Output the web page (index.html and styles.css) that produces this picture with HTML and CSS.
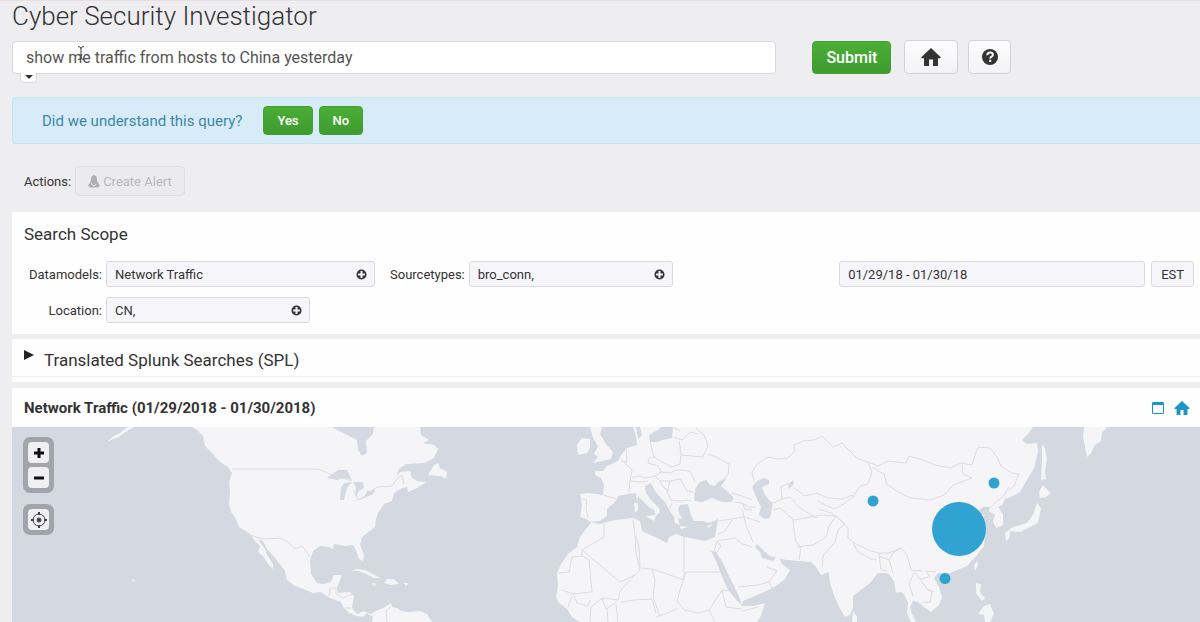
FILE: index.html
```html
<!DOCTYPE html>
<html lang="en">
<head>
    <meta charset="UTF-8">
    <meta name="viewport" content="width=device-width, initial-scale=1.0">
    <title>Cyber Security Investigator</title>
    <link rel="stylesheet" href="styles.css">
</head>
<body>
    <!-- shared icons -->
    <svg class="sprite" aria-hidden="true">
        <symbol id="icon-home" viewBox="0 0 20 18">
            <path d="M10 0 20 9.400 18.800 10.300H17V17.200Q17 18 16.200 18H12V11.500H8V18H3.800Q3 18 3 17.200V10.300H1.200L0 9.400Z"/>
        </symbol>
        <symbol id="icon-plus" viewBox="0 0 12 12">
            <path fill-rule="evenodd" d="M6 0.500a5.500 5.500 0 1 0 0 11a5.500 5.500 0 0 0 0-11ZM4.900 2.300H7.100V4.900H9.700V7.100H7.100V9.700H4.900V7.100H2.300V4.900H4.900Z"/>
        </symbol>
    </svg>

    <h1>Cyber Security Investigator</h1>

    <!-- Query -->
    <form class="query">
        <div class="query-box">
            <input type="text" class="query-input" aria-label="Query" value="show me traffic from hosts to China yesterday">
            <button type="button" class="query-toggle" aria-label="Query history"></button>
            <svg class="ibeam" viewBox="0 0 8 16" aria-hidden="true"><path d="M1 1.500Q4 1.500 4 4V12Q4 14.500 1 14.500M7 1.500Q4 1.500 4 4M4 12Q4 14.500 7 14.500M2.500 10H5.500"/></svg>
        </div>
        <button type="button" class="btn btn-green btn-submit">Submit</button>
        <button type="button" class="btn btn-home" aria-label="Home"><svg class="icon-home"><use href="#icon-home"/></svg></button>
        <button type="button" class="btn btn-help" aria-label="Help">
            <svg class="icon-help" viewBox="0 0 16 16"><circle cx="8" cy="8" r="8"/><path d="M5.300 6.200C5.300 4.500 6.400 3.600 8.100 3.600S10.900 4.500 10.900 6C10.900 7.700 8.200 7.700 8.200 9.500M8.200 10.800V12.900"/></svg>
        </button>
    </form>

    <div class="confirm">
        <span class="confirm-text">Did we understand this query?</span>
        <button type="button" class="btn btn-green btn-small">Yes</button>
        <button type="button" class="btn btn-green btn-small">No</button>
    </div>

    <div class="actions">
        <span>Actions:</span>
        <button type="button" class="btn btn-alert" disabled>
            <svg class="icon-bell" viewBox="0 0 12 13"><path d="M6 0Q8.800 0.500 8.900 4Q9 7 10.600 8.500L12 10.500Q11 12.500 8.500 12.500H3Q1 12.500 0 10.500L1.600 8.200Q3 6.500 3.100 4Q3.200 0.500 6 0Z"/><path class="crack" d="M3 8 5.500 11 8 9.500"/></svg>
            Create Alert
        </button>
    </div>

    <!-- Search scope -->
    <section class="panel scope">
        <h2>Search Scope</h2>
        <div class="row">
            <label class="first" for="datamodels">Datamodels:</label>
            <div class="field wide">
                <input type="text" id="datamodels" value="Network Traffic">
                <button type="button" aria-label="Add datamodel"><svg><use href="#icon-plus"/></svg></button>
            </div>
            <label class="second" for="sourcetypes">Sourcetypes:</label>
            <div class="field">
                <input type="text" id="sourcetypes" value="bro_conn,">
                <button type="button" aria-label="Add sourcetype"><svg><use href="#icon-plus"/></svg></button>
            </div>
            <div class="field dates">
                <input type="text" aria-label="Date range" value="01/29/18 - 01/30/18">
            </div>
            <button type="button" class="zone">EST</button>
        </div>
        <div class="row">
            <label class="first" for="location">Location:</label>
            <div class="field">
                <input type="text" id="location" value="CN,">
                <button type="button" aria-label="Add location"><svg><use href="#icon-plus"/></svg></button>
            </div>
        </div>
    </section>

    <details class="panel spl">
        <summary>Translated Splunk Searches (SPL)</summary>
    </details>

    <!-- Results map -->
    <section class="panel results">
        <header class="results-head">
            <h3>Network Traffic (01/29/2018 - 01/30/2018)</h3>
            <a href="#" aria-label="Open in window"><svg class="icon-window" viewBox="0 0 12 12"><path d="M0.500 0.500H11.500V11.500H0.500ZM0 1.500H12M0 2.500H12"/></svg></a>
            <a href="#" aria-label="Home"><svg class="icon-home-blue"><use href="#icon-home"/></svg></a>
        </header>
        <div class="map">
            <svg class="world" viewBox="12 427 1188 195" preserveAspectRatio="xMinYMin slice" role="img" aria-label="World map">
                <g class="land">
                    <!-- americas -->
                    <path d="M192 427 197 430 203 436 205 446 213 454 219 461 228 467 232 473 229 482 230 492 229 505 231 512 235 517 239 527 246 531 251 535 255 541 260 546 258 552 263 556 268 564 273 569 273 564 267 555 265 549 260 542 259 539 263 541 267 549 275 558 279 563 285 571 287 580 295 586 306 590 313 593 321 592 330 598 341 602 344 608 349 613 357 616 363 617 367 613 373 617 372 622H432L427 614 420 611 410 612 401 611 397 608 392 607 391 603 383 608 376 611 371 614 364 611 357 614 352 608 354 596 350 592 338 593 337 588 342 575 334 575 331 582 324 584 317 583 311 574 310 561 313 551 320 546 329 547 333 549 334 544 345 546 353 545 356 550 359 559 363 561 364 555 360 545 362 537 371 530 375 527 376 519 378 513 384 504 392 501 394 493 402 488 407 487 408 492 417 488 426 482 417 481 412 478 410 471 400 472 396 477 399 469 406 464 424 463 434 458 438 449 434 445 423 443 429 440 421 435 420 427Z"/>
                    <path d="M428 475 434 465 438 463 440 468 447 472 446 479 441 476Z"/>
                    <path d="M351 571 357 569 365 570 373 574 380 578 374 578 366 574 358 571ZM384 583 387 579 394 579 399 584 391 585ZM371 584 375 583 376 586ZM403 583 408 583 407 586Z"/>
                    <path d="M106 442 114 436 120 433 127 427H134L127 431 119 437ZM132 579 135 580 133 582Z"/>
                    <!-- europe, africa, asia -->
                    <path d="M633 427H1033L1029 433 1022 440 1026 444 1037 443 1038 452 1034 468 1027 480 1020 492 1013 496 1005 499 1002 505 998 507 1003 514 1003 525 996 528 993 521 995 515 989 511 990 507 983 507 978 511 972 514 985 515 978 522 985 535 984 546 977 555 967 566 955 571 950 573 946 573 938 573 934 578 939 587 942 597 939 605 931 612 924 607 918 602 913 601 910 607 912 614 916 622H911L907 613 908 603 904 594 901 592 896 593 894 581 888 573 878 573 871 582 861 590 853 596 853 608 850 615 845 617 839 607 834 595 830 583 829 572 821 575 816 567 811 562 800 561 786 560 778 558 770 556 764 551 757 544 755 547 760 552 762 558 773 561 778 555 782 564 790 570 785 579 776 586 762 593 743 601 741 606 754 606 765 603 761 616 757 622H580L572 617 567 609 558 602 556 597 558 586 557 573 561 564 568 554 577 547 580 537 586 529 591 523 587 519 580 517 582 505 580 494 588 493 603 495 604 485 601 478 595 475 595 471 603 471 607 466 618 461 621 455 627 448 637 445 636 436Z"/>
                    <path d="M590 427H602L600 434 606 444 613 452 611 459 602 461 593 463 598 457 594 454 598 446 593 438ZM578 455 577 445 582 438 590 439 590 448 587 453Z"/>
                    <!-- japan and the pacific islands -->
                    <path d="M1042 444 1045 448 1047 459 1045 471 1046 479 1041 480 1042 462ZM1043 485 1049 491 1051 493 1046 497 1040 498 1039 492ZM1037 503 1041 508 1038 523 1028 528 1021 532 1010 531 1009 539 1006 541 1005 533 1013 527 1027 523 1033 515Z"/>
                    <path d="M1084 427 1083 437 1087 457 1091 453 1095 445 1101 441 1102 433 1107 427ZM977 561 978 565 975 571 974 565ZM976 583 981 584 980 593 985 598 982 601 976 593ZM984 606 990 604 994 614 990 622H985L984 615 978 614ZM853 611 857 617 857 622H852ZM940 575 947 574 943 580Z"/>
                </g>
                <g class="water">
                    <!-- hudson bay and the great lakes -->
                    <path d="M332 427H374L373 434 366 441 367 453 362 456 358 450 357 440 347 435 339 431Z"/>
                    <path d="M327 478 338 470 347 470 352 480 344 478 337 480ZM340 500 341 487 345 483 352 482 347 488 344 500ZM353 482 363 482 364 488 359 491 355 498 356 487ZM354 501 365 496 367 491 375 490 373 494 362 499Z"/>
                    <!-- mediterranean and baltic -->
                    <path d="M589 522 600 521 607 516 607 509 617 500 618 496 628 494 635 493 641 499 649 507 654 510 656 516 660 512 659 508 652 501 646 493 645 486 651 483 655 491 661 498 666 503 669 510 674 517 675 523 680 525 678 518 682 519 678 510 680 505 688 504 691 515 694 521 703 521 709 523 718 519 715 537 705 541 691 538 684 537 676 534 669 537 667 543 655 537 642 531 640 521 633 518 615 520 600 524Z"/>
                    <path d="M650 442 649 435 658 430 661 427H673L672 438 663 440 657 442ZM636 427H640L642 435 638 439Z"/>
                    <!-- black sea, caspian, aral, red sea -->
                    <path d="M694 501 695 489 700 482 706 480 710 485 714 486 720 481 727 478 721 486 729 493 734 498 731 502 722 502 712 498 702 502ZM752 487 757 481 764 478 769 480 769 484 762 487 765 495 769 500 773 503 770 518 764 519 759 515 761 507 756 497ZM788 485 793 480 794 484 789 489ZM711 551 716 552 723 563 729 576 738 594 742 605 737 601 728 590 721 574 717 563Z"/>
                </g>
                <g class="land">
                    <path d="M646 516 656 515 654 521ZM634 503 638 503 638 511 635 512ZM636 495 638 495 637 501ZM680 526 688 527 681 529ZM707 526 713 524 709 528ZM641 430 646 429 644 437Z"/>
                </g>
                <g class="borders">
                    <path d="M232 469H318L325 472 338 477 352 481M353 490 358 498M371 491 378 487 392 486 397 479 402 475 404 484M250 535 263 539 280 538 288 542 295 549 302 546 310 557M329 596 330 588 336 588 336 594 343 598 353 594M345 608 351 608M387 622 386 611 391 607"/>
                    <!-- europe -->
                    <path d="M582 499 587 500 586 508 588 518M603 495 617 499M620 458 627 465 632 470 630 481 629 492M622 461 627 462 626 449M632 477 640 476 645 478 655 476 661 472 658 466 648 463 649 458 654 457 650 442M630 481 640 482 648 481M654 457 662 462 672 467 680 464 681 454 679 441M674 437 682 440 690 432 698 434M661 472 670 473 676 470 690 471 695 482M673 427 680 431M681 455 703 457 708 446 704 435 696 428M708 454 716 457 729 464 728 475 723 479M655 476 660 481 670 481 680 479 687 491 693 492M660 481 663 487 669 491M670 481 667 492 671 500 680 501 691 500M669 510 672 503M731 493 742 496 752 500M734 502 742 503 745 509 752 510M742 503 749 507 756 507M718 521 732 519 744 517 747 528 753 542M744 517 742 509M718 534 725 531 732 520M717 541 723 540 735 538 743 544 752 547"/>
                    <!-- africa and arabia -->
                    <path d="M604 524 604 537 592 544 582 550 582 556 572 557 569 572 558 573M582 556 589 560 592 592 573 594 562 590M582 550 620 582 635 575 640 570 636 553 635 536 633 519M640 566 639 546 636 536M640 568 652 569 684 580 684 537M686 572 722 572M686 572 680 590 677 601 684 610M652 569 655 580 653 597 660 616M635 575 620 591 618 600 602 598 591 607 590 622M572 596 568 607M573 594 577 603 588 606 590 600M602 598 606 609 617 602M607 608 608 622M616 605 618 622M621 602 634 600 652 599M652 599 656 613M656 617 668 613 678 608M684 610 698 613 709 610 722 590 730 591M709 610 715 622M722 590 726 607 742 609M742 611 758 607M715 555 721 546 717 541 714 551M738 587 758 585 769 582 777 571 767 567M769 582 773 590"/>
                    <!-- central asia -->
                    <path d="M752 472 757 464 768 457 778 459 788 458 795 451 794 445 803 441 814 440 822 436 833 447 842 443 852 453 858 459 868 462M752 472 754 482M773 503 782 499 781 487 789 483M782 499 790 497 800 508 810 514 817 518M794 488 805 496 817 493 827 498 842 499 853 495M817 500 825 505 834 509 842 505 853 497 860 486 868 484 872 472 868 462M773 510 780 508 793 519 794 530 796 542 801 547 799 560M794 520 811 517 823 515 836 516 829 526 826 537 813 545 797 547M836 516 845 524 838 530 835 542 823 556 822 567M745 517 760 522M819 509 831 513 838 518 848 528 848 538 854 543 871 551 879 553 889 553 901 548 907 555 911 570 922 571"/>
                    <!-- mongolia, china, india, indochina -->
                    <path d="M868 462 878 466 888 461 906 463 909 456 923 460 935 465 950 468 961 463 972 465 975 455 978 447 990 448 997 457 1001 466 1012 473 1019 474 1014 486 1009 490M872 467 884 474 887 484 898 492 911 498 930 500 944 495 953 485 972 478 963 474 962 464M1009 487 1003 497 997 501 990 508M853 543 858 552 871 559 876 560M879 553 881 570 887 571M879 556 889 560 894 552 901 548M889 560 893 573M914 571 920 579 930 577 926 571 936 572M914 573 909 584 913 596M920 579 927 589 932 592 930 602 922 603M927 589 934 592"/>
                </g>
                <g class="traffic">
                    <circle cx="873" cy="501" r="5.500"/>
                    <circle cx="994" cy="483" r="5.500"/>
                    <circle cx="945" cy="578.500" r="5.500"/>
                    <circle cx="959" cy="529" r="27"/>
                </g>
            </svg>
            <div class="map-controls">
                <div class="control">
                    <button type="button" aria-label="Zoom in"><svg viewBox="0 0 10 10"><path d="M5 0V10M0 5H10"/></svg></button>
                    <button type="button" aria-label="Zoom out"><svg viewBox="0 0 10 10"><path d="M0 5H10"/></svg></button>
                </div>
                <div class="control">
                    <button type="button" aria-label="Locate"><svg class="icon-locate" viewBox="0 0 18 18"><circle cx="9" cy="9" r="6"/><circle class="dot" cx="9" cy="9" r="2"/><path d="M9 1V4M9 14V17M1 9H4M14 9H17"/></svg></button>
                </div>
            </div>
        </div>
    </section>
</body>
</html>
```

FILE: styles.css
```css
* {
    box-sizing: border-box;
}
body {
    display: flex;
    flex-direction: column;
    min-height: 100vh;
    margin: 0;
    padding-left: 12px;
    border-top: 1px solid #e8dfe3;
    font-family: Roboto, "Liberation Sans", sans-serif;
    font-size: 13px;
    color: #333;
    background: #eeeef0;
}
button, input {
    font-family: inherit;
    font-size: inherit;
    color: inherit;
}
button {
    cursor: pointer;
}
h1 {
    margin: 0 0 9px;
    font-size: 26px;
    font-weight: 300;
    line-height: 30px;
}
.sprite {
    display: none;
}

/* Query */
.query {
    display: flex;
    align-items: center;
    padding-right: 12px;
}
.query-box {
    position: relative;
    width: 65%;
    margin-right: 36px;
}
.query-input {
    display: block;
    width: 100%;
    height: 33px;
    padding: 0 13px;
    font-size: 16px;
    color: #555;
    background: #fff;
    border: 1px solid #d8d8dc;
    border-radius: 4px;
}
.query-toggle {
    position: absolute;
    top: 32px;
    left: 8px;
    width: 17px;
    height: 10px;
    padding: 0;
    background: #fff;
    border: 1px solid #d8d8dc;
    border-top: 0;
    border-radius: 0 0 4px 4px;
}
.query-toggle::after {
    content: "";
    position: absolute;
    top: 2px;
    left: 4px;
    border: 4px solid transparent;
    border-top-color: #333;
    border-bottom: 0;
}
.ibeam {
    position: absolute;
    top: 4px;
    left: 65px;
    width: 8px;
    height: 16px;
    fill: none;
    stroke: #444;
}

/* Buttons */
.btn {
    display: flex;
    align-items: center;
    justify-content: center;
    height: 34px;
    padding: 0 13px;
    background: linear-gradient(#fcfcfd, #f3f3f5);
    border: 1px solid #d2d2d6;
    border-radius: 4px;
}
.btn-green {
    font-weight: 500;
    color: #fff;
    background: linear-gradient(#4aae36, #3f9c2f);
    border-color: #429f32;
}
.btn-submit {
    height: 33px;
    font-size: 16px;
}
.btn-small {
    height: 29px;
    margin-right: 6px;
    font-size: 13px;
}
.btn-home {
    width: 54px;
    margin: 0 10px 0 13px;
}
.btn-help {
    width: 43px;
}
.icon-home {
    width: 20px;
    height: 18px;
    fill: #333;
}
.icon-help {
    flex: none;
    width: 16px;
    height: 16px;
    fill: #333;
}
.icon-help path {
    fill: none;
    stroke: #f7f7f8;
    stroke-width: 2;
}

.confirm {
    display: flex;
    align-items: center;
    height: 47px;
    margin-top: 23px;
    padding-left: 29px;
    background: #d7ecf8;
    border: 1px solid #c5e6ef;
    border-right: 0;
    border-radius: 4px 0 0 4px;
}
.confirm-text {
    margin-right: 21px;
    font-size: 15px;
    color: #3f87a6;
}
.actions {
    display: flex;
    align-items: center;
    gap: 4px;
    margin: 22px 0 16px;
    padding-left: 12px;
}
.btn-alert {
    gap: 3px;
    height: 30px;
    padding: 0 12px;
    color: #b8b8bc;
    background: #ebebed;
    border-color: #dedee1;
}
.icon-bell {
    width: 12px;
    height: 13px;
    fill: #b0b0b4;
}
.crack {
    fill: none;
    stroke: #ebebed;
}

/* Panels */
.panel {
    background: #fefefe;
}
.scope {
    padding: 12px 6px 11px 12px;
}
.scope h2 {
    margin: 0 0 17px;
    font-size: 17px;
    font-weight: 400;
    line-height: 20px;
}
.row {
    display: flex;
    align-items: center;
}
.row + .row {
    margin-top: 10px;
}
.row label {
    margin-right: 4px;
}
.row .first {
    width: 78px;
    text-align: right;
}
.row .second {
    margin-left: 15px;
}
.field {
    display: flex;
    align-items: center;
    width: 204px;
    height: 26px;
    padding: 0 7px 0 8px;
    background: #f6f6fa;
    border: 1px solid #d9d9df;
    border-radius: 3px;
}
.field.wide {
    width: 269px;
}
.field.dates {
    width: 306px;
    margin: 0 6px 0 auto;
}
.field input {
    flex: 1;
    min-width: 0;
    padding: 0;
    background: none;
    border: 0;
}
.field button {
    display: flex;
    padding: 0;
    background: none;
    border: 0;
}
.field svg {
    width: 11px;
    height: 11px;
    fill: #333;
}
.zone {
    height: 26px;
    padding: 0 9px;
    background: #f6f6fa;
    border: 1px solid #d9d9df;
    border-radius: 3px;
}

.spl {
    margin: 5px 0 6px;
    padding-bottom: 5px;
}
.spl summary {
    display: flex;
    gap: 10px;
    height: 38px;
    padding: 0 12px;
    font-size: 17px;
    line-height: 42px;
    border-bottom: 1px solid #f0f0f2;
    cursor: pointer;
}
.spl summary::before {
    content: "";
    margin-top: 11px;
    border: 5px solid transparent;
    border-left: 10px solid #222;
    border-right: 0;
    height: 0;
}

/* Results */
.results {
    display: flex;
    flex: 1;
    flex-direction: column;
}
.results-head {
    display: flex;
    align-items: center;
    gap: 10px;
    height: 39px;
    padding: 0 10px 0 12px;
}
.results-head h3 {
    flex: 1;
    margin: 0;
    font-size: 15px;
    font-weight: 700;
}
.results-head a {
    display: flex;
}
.icon-window {
    width: 12px;
    height: 12px;
    fill: none;
    stroke: #1e93c6;
}
.icon-home-blue {
    width: 16px;
    height: 14px;
    fill: #1e93c6;
}
.map {
    position: relative;
    flex: 1;
    min-height: 195px;
    background: #d4d8e0;
}
.world {
    position: absolute;
    width: 100%;
    height: 100%;
}
.land {
    fill: #f5f5f8;
}
.water {
    fill: #d4d8e0;
}
.borders {
    fill: none;
    stroke: #e0dade;
    stroke-linejoin: round;
}
.traffic {
    fill: #31a3d2;
}
.map-controls {
    position: absolute;
    top: 10px;
    left: 11px;
    display: flex;
    flex-direction: column;
    gap: 11px;
}
.control {
    display: flex;
    flex-direction: column;
    gap: 4px;
    padding: 5px;
    background: #a2a4ab;
    border-radius: 7px;
}
.control button {
    display: flex;
    align-items: center;
    justify-content: center;
    width: 21px;
    height: 21px;
    padding: 0;
    background: #f0f0f3;
    border: 0;
    border-radius: 4px;
}
.control svg {
    flex: none;
    width: 10px;
    height: 10px;
    fill: none;
    stroke: #111;
    stroke-width: 3;
}
.control .icon-locate {
    width: 18px;
    height: 18px;
    stroke: #444;
    stroke-width: 1;
}
.icon-locate path {
    stroke-width: 2;
}
.icon-locate .dot {
    fill: #444;
}
```
